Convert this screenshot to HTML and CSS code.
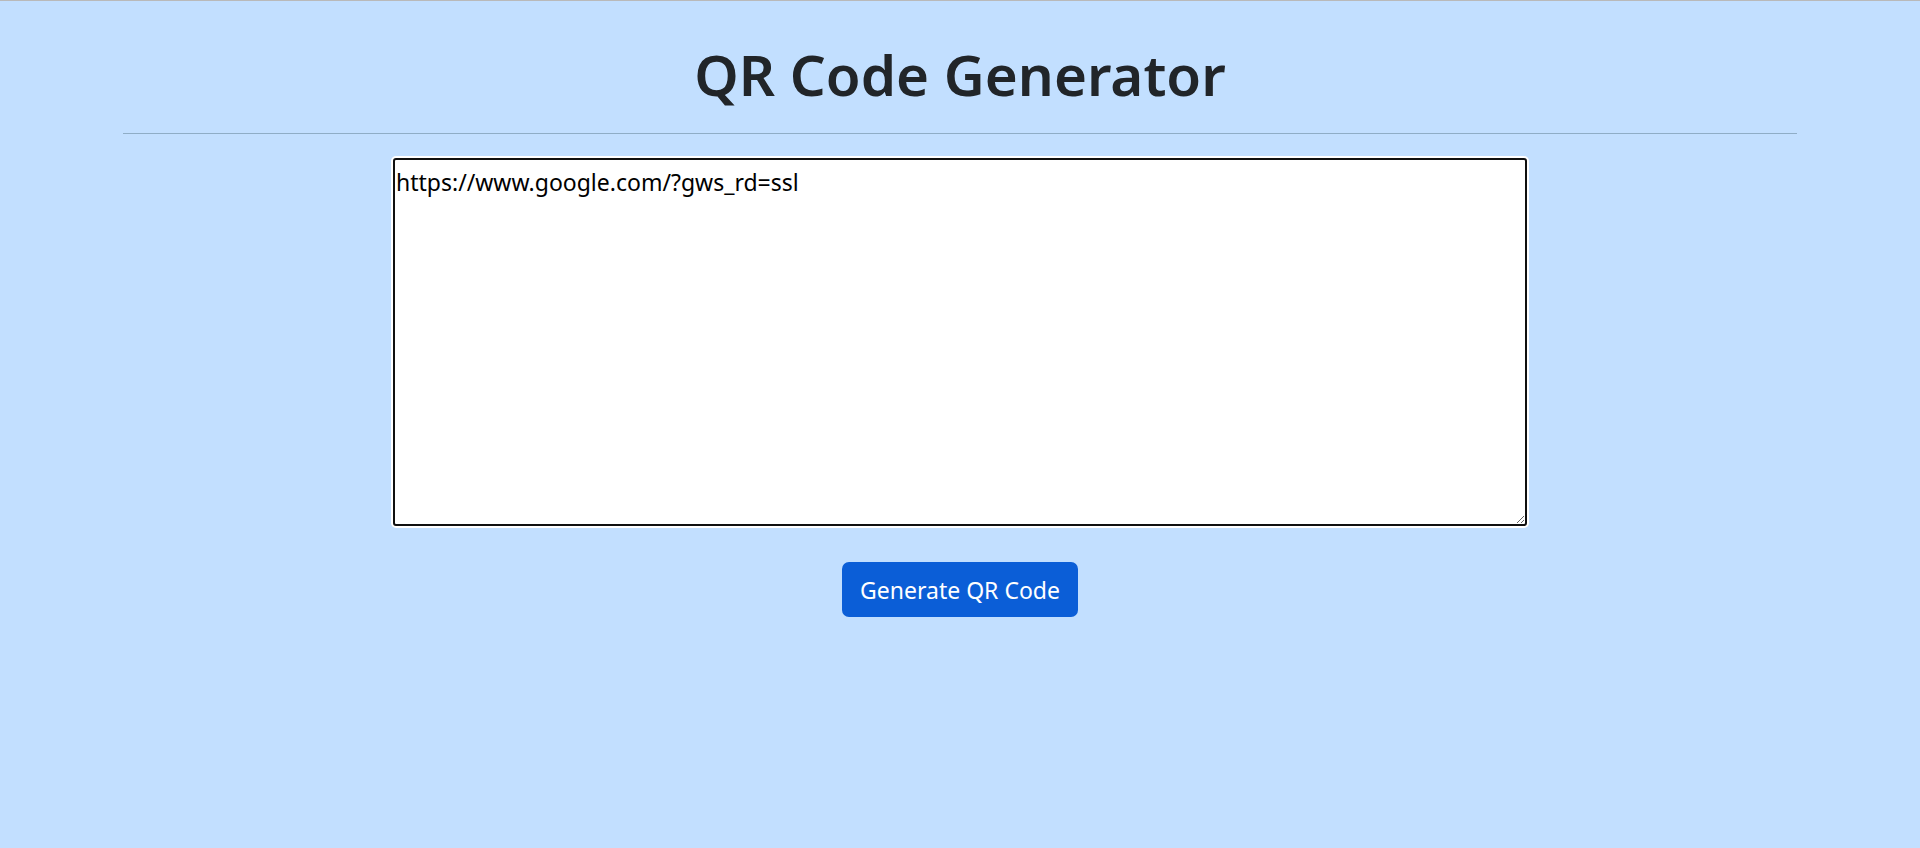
FILE: index.html
```html
<!DOCTYPE html>
<html lang="en">
<head>
<meta charset="utf-8">
<title>QR Code Generator</title>
<link rel="stylesheet" href="styles.css">
</head>
<body>
<main class="page">
  <h1 class="title">QR Code Generator</h1>
  <hr class="divider">
  <div class="form">
    <textarea class="input">https://www.google.com/?gws_rd=ssl</textarea>
    <button class="btn" type="button">Generate QR Code</button>
  </div>
</main>
</body>
</html>
```
FILE: styles.css
```css
html, body {
  margin: 0;
  padding: 0;
}
body {
  background: #c2dfff;
  border-top: 1px solid #b9b9b9;
  min-height: 847px;
  font-family: "Noto Sans", "Open Sans", sans-serif;
  color: #212529;
}
.page {
  padding: 0 123px;
  display: flex;
  flex-direction: column;
  align-items: stretch;
}
.title {
  margin: 38px 0 0;
  font-size: 56.5px;
  line-height: 72px;
  font-weight: 600;
  text-align: center;
  color: #212529;
}
.divider {
  margin: 22px 0 0;
  border: 0;
  border-top: 1px solid #8fadc6;
  height: 0;
}
.form {
  display: flex;
  flex-direction: column;
  align-items: center;
  padding-top: 24px;
}
.input {
  box-sizing: border-box;
  width: 1134px;
  height: 368px;
  margin: 0;
  border: 2px solid #101010;
  border-radius: 3px;
  box-shadow: 0 0 0 2px #ffffff;
  outline: none;
  padding: 7px 1px 1px;
  font-family: "Noto Sans", "Open Sans", sans-serif;
  font-size: 23px;
  line-height: 31px;
  color: #000;
  background: #fff;
  resize: vertical;
}
.btn {
  margin-top: 36px;
  box-sizing: border-box;
  width: 236px;
  height: 55px;
  border: 0;
  border-radius: 7px;
  background: #0b5ed7;
  color: #fff;
  font-family: "Noto Sans", "Open Sans", sans-serif;
  font-size: 23px;
  padding: 0 14px;
  cursor: pointer;
}
```
